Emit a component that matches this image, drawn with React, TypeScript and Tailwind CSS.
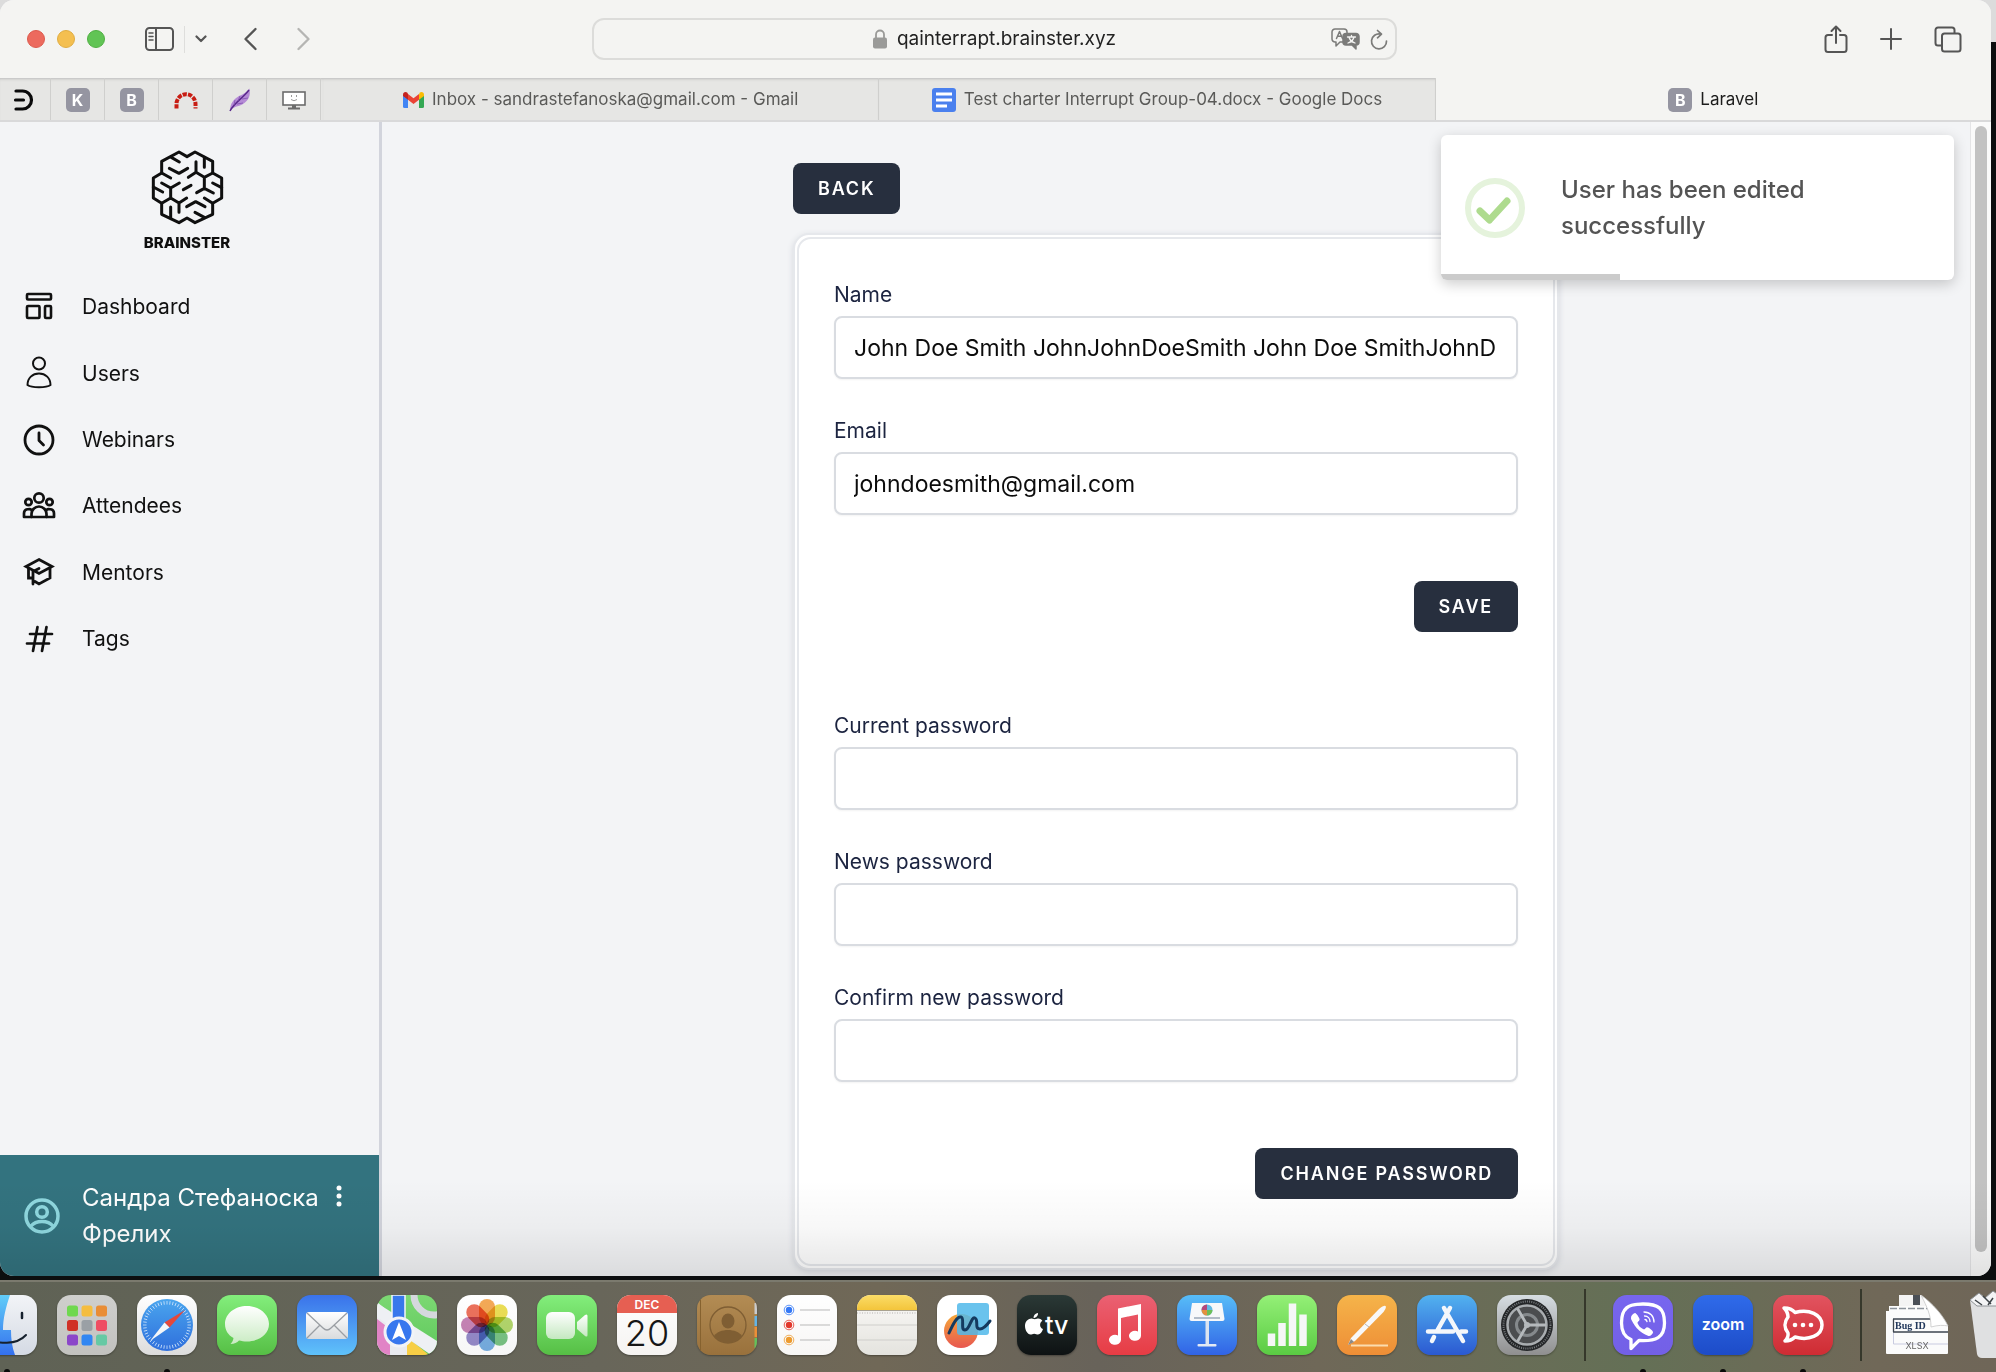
import { useState, type ReactNode } from "react"

interface FieldProps {
  id: string
  label: string
  type?: string
  defaultValue?: string
}

const stroke = {
  fill: "none",
  stroke: "currentColor",
  strokeLinecap: "round",
  strokeLinejoin: "round"
} as const

/* ---------- Browser chrome ---------- */

function Toolbar() {
  return (
    <header className="flex h-[78px] shrink-0 items-center justify-between bg-[#f4f4f2] pr-[29px] pl-[27px] text-[#555555]">
      <div className="flex w-[480px] items-center">
        <div className="flex gap-3">
          <button aria-label="Close" className="size-[18px] rounded-full border border-[#dd5a4d] bg-[#ec6a5e]" />
          <button aria-label="Minimize" className="size-[18px] rounded-full border border-[#e0ad42] bg-[#f4bf50]" />
          <button aria-label="Zoom" className="size-[18px] rounded-full border border-[#50b043] bg-[#61c455]" />
        </div>
        <button aria-label="Sidebar" className="ml-10">
          <svg width="29" height="24" viewBox="0 0 29 24" {...stroke} strokeWidth="2">
            <rect x="1" y="1" width="27" height="22" rx="3.500" />
            <path d="M11 1v22" />
            <path d="M4 6h4M4 9.500h4M4 13h4" strokeWidth="1.500" />
          </svg>
        </button>
        <span className="ml-2.5 h-[27px] w-px bg-[#dededc]" />
        <button aria-label="Tab groups" className="ml-2.5">
          <svg width="12" height="8" viewBox="0 0 12 8" {...stroke} strokeWidth="2.200">
            <path d="M1.500 1.500 6 6l4.500-4.500" />
          </svg>
        </button>
        <button aria-label="Go back" className="ml-9">
          <svg width="14" height="24" viewBox="0 0 14 24" {...stroke} strokeWidth="2.300">
            <path d="M12.500 2 2.500 12l10 10" />
          </svg>
        </button>
        <button aria-label="Go forward" className="ml-10 text-[#b5b5b3]">
          <svg width="14" height="24" viewBox="0 0 14 24" {...stroke} strokeWidth="2.300">
            <path d="m1.500 2 10 10-10 10" />
          </svg>
        </button>
      </div>
      <div className="flex h-[42px] w-[805px] items-center rounded-xl border-2 border-[#dcdcda] px-2">
        <span className="w-14" />
        <div className="flex flex-1 items-center justify-center gap-2.5 text-[19px] text-[#222222]">
          <svg width="14" height="20" viewBox="0 0 14 20">
            <rect x="0" y="8.500" width="14" height="11" rx="2" fill="#9a9a98" />
            <path d="M3 9V5.500a4 4 0 0 1 8 0V9" fill="none" stroke="#9a9a98" strokeWidth="1.800" />
          </svg>
          <span>qainterrapt.brainster.xyz</span>
        </div>
        <div className="flex w-14 items-center gap-2.5 text-[#7b7b79]">
          <button aria-label="Translate">
            <svg width="29" height="22" viewBox="0 0 29 22" {...stroke} strokeWidth="1.500">
              <path d="M12 14H9l-4 4v-4H4a3 3 0 0 1-3-3V4a3 3 0 0 1 3-3h9a3 3 0 0 1 3 3v1" />
              <path d="m5.500 10.500 3-7 3 7M6.500 8.300h4" />
              <path d="M15 5.500h10a3 3 0 0 1 3 3V14a3 3 0 0 1-3 3v4l-4-4h-6a3 3 0 0 1-3-3V8.500a3 3 0 0 1 3-3Z" fill="currentColor" />
              <path d="M16.500 9h8M20.500 7.500V9M23 9c-.5 2.500-3 5-6 6M18 9c.5 2.500 3 5 6 6" stroke="#f4f4f2" strokeWidth="1.300" />
            </svg>
          </button>
          <button aria-label="Reload">
            <svg width="18" height="21" viewBox="0 0 18 21" {...stroke} strokeWidth="1.700">
              <path d="M10.500 5A7.500 7.500 0 1 0 16.500 12M7.500 1.500l4 3.700-4 3.600" />
            </svg>
          </button>
        </div>
      </div>
      <div className="flex w-[480px] items-center justify-end gap-8">
        <button aria-label="Share">
          <svg width="24" height="29" viewBox="0 0 24 29" {...stroke} strokeWidth="2">
            <path d="M8 10H4a2.500 2.500 0 0 0-2.500 2.500v12A2.500 2.500 0 0 0 4 27h16a2.500 2.500 0 0 0 2.500-2.500v-12A2.500 2.500 0 0 0 20 10h-4M12 18V2M7.500 6 12 1.500 16.500 6" />
          </svg>
        </button>
        <button aria-label="New tab">
          <svg width="22" height="22" viewBox="0 0 22 22" {...stroke} strokeWidth="2">
            <path d="M11 1v20M1 11h20" />
          </svg>
        </button>
        <button aria-label="Tab overview">
          <svg width="28" height="27" viewBox="0 0 28 27" {...stroke} strokeWidth="2">
            <path d="M8 19.500H4A2.500 2.500 0 0 1 1.500 17V4A2.500 2.500 0 0 1 4 1.500h14A2.500 2.500 0 0 1 20.500 4v3" />
            <rect x="8" y="7.500" width="18.500" height="18" rx="2.500" />
          </svg>
        </button>
      </div>
    </header>
  )
}

function LetterBadge({ letter }: { letter: string }) {
  return (
    <span className="flex size-6 items-center justify-center rounded-[5px] bg-[#9595a1] text-[16px] leading-6 font-bold text-white">
      {letter}
    </span>
  )
}

function PinnedTab({ label, children }: { label: string; children: ReactNode }) {
  return (
    <button
      aria-label={label}
      className="flex w-[54px] shrink-0 items-center justify-center border-r border-[#cfcfcd] pt-0.5">
      {children}
    </button>
  )
}

function TabStrip() {
  return (
    <nav className="flex h-11 shrink-0 border-b-2 border-[#d9d9da] bg-[#f4f4f2] text-[17px] text-[#5a5a58]">
      <div className="flex w-[323px] shrink-0 bg-[#e6e6e4] shadow-[inset_0_3px_3px_-2px_#bbbbbb]">
        <button
          aria-label="Deepnote"
          className="flex w-[51px] shrink-0 items-center border-r border-[#cfcfcd] pt-0.5 pl-[13px]">
          <svg width="21" height="22" viewBox="0 0 21 22" fill="none" stroke="#0a0a0a" strokeWidth="3.200" strokeLinecap="round">
            <path d="M3 2h6.500a9 9 0 0 1 0 18H3M2.500 11h8" />
          </svg>
        </button>
        <PinnedTab label="K">
          <LetterBadge letter="K" />
        </PinnedTab>
        <PinnedTab label="B">
          <LetterBadge letter="B" />
        </PinnedTab>
        <PinnedTab label="Redmine">
          <svg width="24" height="17" viewBox="0 0 24 17" fill="none" stroke="#c81e14" strokeWidth="4">
            <path d="M2.500 16.500V12A9.500 9.800 0 0 1 21.500 12V16.500" strokeDasharray="4.200 1.200" />
          </svg>
        </PinnedTab>
        <PinnedTab label="Feather">
          <svg width="22" height="24" viewBox="0 0 22 24">
            <path d="M1 23C1 15 5 11 10 8 15 6 18 4 20.500 0.500 22 8 19 13 14 16 9 19 4 18 1 23Z" fill="#b58bd6" />
            <path d="M1 23C5 15 13 11 20 2" stroke="#5b2a8c" strokeWidth="1.500" fill="none" />
            <path d="m5 17 1-5M9 13l2-5M8 16l6-1M13 11l6-1" stroke="#8150b0" strokeWidth=".8" />
          </svg>
        </PinnedTab>
        <PinnedTab label="Monitor">
          <svg width="24" height="19" viewBox="0 0 24 19">
            <rect x="1" y="1" width="22" height="13" fill="#ffffff" stroke="#6b6b6b" strokeWidth="1.600" />
            <path d="M9.500 4v2M14.500 4v2M9 8.500q3 2.500 6 0" stroke="#9a9a9a" fill="none" />
            <path d="M10 14h4v2.500h4V18.500H6V16.500h4Z" fill="#6b6b6b" />
          </svg>
        </PinnedTab>
      </div>
      <button className="flex flex-1 items-center justify-center gap-2 border-r border-[#cfcfcd] bg-[#e6e6e4] pt-0.5 shadow-[inset_0_3px_3px_-2px_#bbbbbb]">
        <svg width="21" height="16" viewBox="0 0 21 16">
          <path d="M0 3v11.500Q0 16 1.500 16H5V6Z" fill="#4285f4" />
          <path d="M21 3v11.500q0 1.500-1.500 1.500H16V6Z" fill="#34a853" />
          <path d="M16 2.500V7.800l5-3.800V2.500C21 .2 18.500-.7 16.800.6Z" fill="#fbbc04" />
          <path d="M5 7.800V2l5.500 4.200L16 2v5.800L10.500 12Z" fill="#ea4335" />
          <path d="M0 2.500V4l5 3.800V2L4.200.6C2.500-.7 0 .2 0 2.500Z" fill="#c5221f" />
        </svg>
        Inbox - sandrastefanoska@gmail.com - Gmail
      </button>
      <button className="flex flex-1 items-center justify-center gap-2 border-r border-[#cfcfcd] bg-[#e6e6e4] pt-0.5 shadow-[inset_0_3px_3px_-2px_#bbbbbb]">
        <svg width="24" height="24" viewBox="0 0 24 24">
          <rect width="24" height="24" rx="3" fill="#4a80ee" />
          <path d="M4 6h16M4 12h16M4 18h11" stroke="#ffffff" strokeWidth="3" />
        </svg>
        Test charter Interrupt Group-04.docx - Google Docs
      </button>
      <button className="flex flex-1 items-center justify-center gap-2 pt-0.5 text-[#1c1c1c]">
        <LetterBadge letter="B" />
        Laravel
      </button>
    </nav>
  )
}

/* ---------- Sidebar ---------- */

const navItems = [
  {
    label: "Dashboard",
    icon: (
      <g strokeWidth="2.600">
        <rect x="5" y="4" width="24" height="5.500" rx="1" />
        <rect x="5" y="16" width="12.500" height="12" rx="1" />
        <rect x="23" y="16" width="6" height="12" rx="1" />
      </g>
    )
  },
  {
    label: "Users",
    icon: (
      <g strokeWidth="2">
        <circle cx="17" cy="7.500" r="6" />
        <path d="M5.500 29c0-7 5-11.500 11.500-11.500S28.500 22 28.500 29c-4 3-19 3-23 0Z" />
      </g>
    )
  },
  {
    label: "Webinars",
    icon: (
      <g strokeWidth="2.800">
        <circle cx="17" cy="17" r="14" />
        <path d="M17 10v7.500l4.500 4.500" />
      </g>
    )
  },
  {
    label: "Attendees",
    icon: (
      <g strokeWidth="2.700">
        <circle cx="17" cy="9" r="4.700" />
        <circle cx="6.500" cy="13" r="3.200" />
        <circle cx="27.500" cy="13" r="3.200" />
        <path d="M9.500 28v-3a7.500 7.500 0 0 1 15 0v3Z" />
        <path d="M9.500 28H2v-3.500c0-3 2.500-4.500 5.500-4.500l2.500 1M24.500 28H32v-3.500c0-3-2.500-4.500-5.500-4.500l-2.500 1" />
      </g>
    )
  },
  {
    label: "Mentors",
    icon: (
      <g strokeWidth="2.800" strokeLinejoin="miter">
        <path d="m17 4.500 13 7-13 7-13-7Z" />
        <path d="M6.500 13.500V23h3.500M28 13.500V23l-11 6-4-2.500M11 29V16.500l6-3" />
      </g>
    )
  },
  {
    label: "Tags",
    icon: (
      <g strokeWidth="2.700">
        <path d="M15.500 5 11 29M24.500 5 20 29M8 12h22M5 21.500h22" />
      </g>
    )
  }
]

function BrainLogo() {
  return (
    <svg width="75" height="75" viewBox="30 13 225 225" {...stroke} strokeWidth="9">
      <path d="m117 19 24 14 24-14 53 28v35l27 15v60l-27 16v33l-53 25-24-14-24 14-52-25v-33l-25-16V97l25-15V47Z" />
      <path d="m65 82 27 15M94 35l24 14M88 68l29 15 26-15M168 48v32l-23 15M168 80l25 15 25-13M193 35v30M193 95v33l-23 13M193 128l27 14M218 112l27 14M130 132l23-13" />
      <path d="m65 112 27 15 26-15M92 127v30l-27 16M92 157l25 15 23-15M117 172v28M92 184v32M40 124l28 15M140 183l27-15 28 15M165 200l28 15M193 157l25 16" />
    </svg>
  )
}

function Sidebar() {
  return (
    <aside className="flex w-[382px] shrink-0 flex-col border-r-3 border-[#d2d4dc]">
      <a href="#home" className="mt-7 flex flex-col items-center gap-1.5 pr-[5px] text-[#0f0f0f]">
        <BrainLogo />
        <span className="text-[15px] leading-6 font-extrabold">BRAINSTER</span>
      </a>
      <nav className="mt-[19px] flex h-[398px] flex-col">
        {navItems.map((item) => (
          <a
            key={item.label}
            href={`#${item.label.toLowerCase()}`}
            className="flex flex-1 items-center gap-[26px] px-[22px] text-[21px] text-[#111111]">
            <svg width="34" height="34" viewBox="0 0 34 34" {...stroke}>
              {item.icon}
            </svg>
            {item.label}
          </a>
        ))}
      </nav>
      <div className="mt-auto flex h-[121px] items-center bg-[#33737f] px-6 text-white">
        <svg width="36" height="36" viewBox="0 0 36 36" fill="none" stroke="#8fd8df" strokeWidth="3.500" className="shrink-0">
          <circle cx="18" cy="18" r="16" />
          <circle cx="18" cy="14" r="5.300" />
          <path d="M7 28c5-6 17-6 22 0" />
        </svg>
        <p className="ml-[22px] flex-1 text-[24px] leading-9">Сандра Стефаноска Фрелих</p>
        <button aria-label="Account menu" className="mb-10 w-8">
          <svg width="32" height="22" viewBox="0 0 32 22" fill="#ffffff">
            <circle cx="16" cy="3" r="2.500" />
            <circle cx="16" cy="11" r="2.500" />
            <circle cx="16" cy="19" r="2.500" />
          </svg>
        </button>
      </div>
    </aside>
  )
}

/* ---------- Form ---------- */

function Field({ id, label, type = "text", defaultValue = "" }: FieldProps) {
  const [value, setValue] = useState(defaultValue)

  return (
    <div>
      <label htmlFor={id} className="block text-[21px] leading-7 text-[#1c2440]">
        {label}
      </label>
      <input
        id={id}
        type={type}
        value={value}
        onChange={(e) => setValue(e.target.value)}
        className="mt-[7px] h-[63px] w-full rounded-lg border-2 border-[#d9dce1] bg-white px-[18px] text-[23px] text-[#0c0c0c] shadow-xs"
      />
    </div>
  )
}

function DarkButton({ children }: { children: ReactNode }) {
  return (
    <button className="h-[51px] rounded-lg bg-[#272f3e] px-[25px] text-[18px] font-semibold tracking-widest text-white uppercase">
      {children}
    </button>
  )
}

function EditUser() {
  return (
    <main className="flex flex-1 flex-col items-center">
      <div className="mt-[41px] flex w-[766px] flex-1 flex-col items-start">
        <DarkButton>Back</DarkButton>
        <div className="mt-[19px] w-full rounded-[16px] border-2 border-[#e6e8ec] bg-white p-0.5 shadow-[0_2px_6px_#d5d8de]">
          <div className="flex flex-col rounded-[14px] border-2 border-[#e6e8ec] px-[35px] pt-[42px] pb-[65px]">
            <form className="flex flex-col gap-[38px]" onSubmit={(e) => e.preventDefault()}>
              <Field id="name" label="Name" defaultValue="John Doe Smith JohnJohnDoeSmith John Doe SmithJohnD" />
              <Field id="email" label="Email" type="email" defaultValue="johndoesmith@gmail.com" />
              <div className="mt-7 flex justify-end">
                <DarkButton>Save</DarkButton>
              </div>
            </form>
            <form className="mt-20 flex flex-col gap-[38px]" onSubmit={(e) => e.preventDefault()}>
              <Field id="current-password" label="Current password" type="password" />
              <Field id="new-password" label="News password" type="password" />
              <Field id="confirm-password" label="Confirm new password" type="password" />
              <div className="mt-7 flex justify-end">
                <DarkButton>Change password</DarkButton>
              </div>
            </form>
          </div>
        </div>
      </div>
    </main>
  )
}

function Toast() {
  return (
    <div
      role="status"
      className="absolute top-[13px] right-[37px] flex h-[145px] w-[513px] flex-col overflow-hidden rounded-md bg-white shadow-[0_4px_14px_#00000033]">
      <div className="flex flex-1 items-center gap-9 pt-1.5 pl-6">
        <svg width="60" height="60" viewBox="0 0 60 60" fill="none" strokeLinecap="round" strokeLinejoin="round">
          <circle cx="30" cy="30" r="27" stroke="#e5f3dc" strokeWidth="6" />
          <path d="m15 33 9.500 9L42 23" stroke="#aedb8e" strokeWidth="7" />
        </svg>
        <p className="w-[300px] text-[24px] leading-9 font-medium text-[#545454]">User has been edited successfully</p>
      </div>
      <div className="h-1.5 w-[179px] bg-[#cbcbcb]" />
    </div>
  )
}

/* ---------- Dock ---------- */

function Gradient({ id, from, to }: { id: string; from: string; to: string }) {
  return (
    <defs>
      <linearGradient id={id} x1="0" y1="0" x2="0" y2="1">
        <stop offset="0" stopColor={from} />
        <stop offset="1" stopColor={to} />
      </linearGradient>
    </defs>
  )
}

function DockIcon({ id, label, from, to, running, children }: {
  id: string
  label: string
  from: string
  to: string
  running?: boolean
  children?: ReactNode
}) {
  return (
    <button aria-label={label} className="relative shrink-0">
      <svg width="60" height="60" viewBox="0 0 60 60" className="overflow-hidden rounded-[14px] shadow-[0_1px_2px_#00000055]">
        <Gradient id={id} from={from} to={to} />
        <rect width="60" height="60" fill={`url(#${id})`} />
        {children}
      </svg>
      {running && <span className="absolute -bottom-[19px] left-[27px] h-[5px] w-1.5 rounded-t-full bg-[#0a0a0a]" />}
    </button>
  )
}

const launchpadColors = [
  "#6fd84f", "#f5bd3e", "#e98d35",
  "#d03126", "#9aa0a5", "#ef4d63",
  "#8b46c9", "#3187f2", "#66c9a4"
]

const photoPetals = [
  "#f29a38", "#e8d837", "#a5cf52", "#62b96e",
  "#5fa0dc", "#8276c0", "#bc6fa8", "#e9583f"
]

const ticks = Array.from({ length: 48 }, (_, i) => i * 7.5)

function DockDivider() {
  return <span className="mx-[7px] h-[72px] w-0.5 shrink-0 bg-[#36382b]" />
}

function Dock() {
  return (
    <footer className="h-[92px] shrink-0 overflow-hidden border-t-2 border-[#7b7a6e] bg-[linear-gradient(90deg,#5f6255,#68665a_30%,#706857_44%,#68635a_55%,#6f6858_66%,#647056_82%,#706858_94%,#6f6658)]">
      <div className="-ml-[23px] flex h-[92px] items-center gap-5 pb-1.5">
        <DockIcon id="finder" label="Finder" from="#f2f4f7" to="#d4dae4" running>
          <Gradient id="finder-face" from="#62cdf8" to="#3470ee" />
          <path d="M0 0h33c-4 12-7 23-7 35h8c0 9 1 17 4 25H0Z" fill="url(#finder-face)" />
          <path d="M10 42c10 8 30 8 39-2" stroke="#16212e" strokeWidth="2" fill="none" strokeLinecap="round" />
          <path d="M45 18v5" stroke="#16212e" strokeWidth="2.500" strokeLinecap="round" />
        </DockIcon>
        <DockIcon id="launchpad" label="Launchpad" from="#cfcfcd" to="#c2c2bf">
          {launchpadColors.map((color, i) => (
            <rect key={color} x={10 + (i % 3) * 14.5} y={10.5 + Math.floor(i / 3) * 14.5} width="11" height="11" rx="2.500" fill={color} />
          ))}
        </DockIcon>
        <DockIcon id="safari" label="Safari" from="#ffffff" to="#dcdcdc" running>
          <Gradient id="safari-dial" from="#4aa5ee" to="#2f6fdc" />
          <circle cx="30" cy="30" r="26" fill="url(#safari-dial)" />
          {ticks.map((a) => (
            <path key={a} d="M30 6v3.500" stroke="#cfe4fa" strokeWidth=".8" transform={`rotate(${a} 30 30)`} />
          ))}
          <path d="M48 15 27.500 27.500l5 5Z" fill="#e5483b" />
          <path d="M13 46 27.500 27.500l5 5Z" fill="#f4f6f8" />
        </DockIcon>
        <DockIcon id="messages" label="Messages" from="#83ee7c" to="#56bf45">
          <Gradient id="bubble" from="#ffffff" to="#c9ebc2" />
          <path d="M30 11c-12 0-22 7.500-22 18 0 6 3 11 8.500 14-.5 3-1.500 4.500-3 6 4 0 6.500-1.500 8.500-3.500 2.500.5 5 1 8 1 12 0 22-7.500 22-17.500S42 11 30 11Z" fill="url(#bubble)" />
        </DockIcon>
        <DockIcon id="mail" label="Mail" from="#3a72ea" to="#5fc2fa">
          <Gradient id="envelope" from="#ffffff" to="#d9dbdd" />
          <rect x="9" y="17" width="42" height="27" rx="3" fill="url(#envelope)" />
          <path d="m10 18 16 15q4 4 8 0l16-15M10 43l13-13M50 43 37 30" stroke="#9a9ea3" strokeWidth="1.300" fill="none" />
        </DockIcon>
        <DockIcon id="maps" label="Maps" from="#7cd873" to="#5fc95c">
          <path d="M0 7v53h30V32Z" fill="#e9ebef" />
          <path d="M0 24v36h13V34Z" fill="#e184c6" />
          <path d="M30 42v18h22Z" fill="#f7ce46" />
          <path d="m0 8 60 38v14h-6L0 22Z" fill="#eef0f4" />
          <path d="M15 0h13v38H15Z" fill="#3878ec" stroke="#f5f6f8" strokeWidth="1.500" />
          <circle cx="57" cy="0" r="20" fill="none" stroke="#d5d8dd" strokeWidth="7" />
          <circle cx="22" cy="37" r="14" fill="#3777ee" stroke="#f1f3f7" strokeWidth="3" />
          <path d="m22 27 7 18-7-4-7 4Z" fill="#ffffff" />
        </DockIcon>
        <DockIcon id="photos" label="Photos" from="#ffffff" to="#f6f6f6">
          {photoPetals.map((color, i) => (
            <rect
              key={color}
              x="22"
              y="4"
              width="16"
              height="26"
              rx="8"
              fill={color}
              fillOpacity=".85"
              className="mix-blend-multiply"
              transform={`rotate(${i * 45} 30 30)`}
            />
          ))}
        </DockIcon>
        <DockIcon id="facetime" label="FaceTime" from="#83ee7c" to="#56bf45">
          <Gradient id="camera" from="#ffffff" to="#c4e8c0" />
          <rect x="9" y="17" width="29" height="27" rx="6" fill="url(#camera)" />
          <path d="m40 27 8-7q2.500-1.500 2.500 1v19q0 2.500-2.500 1l-8-7Z" fill="url(#camera)" />
        </DockIcon>
        <DockIcon id="calendar" label="Calendar" from="#ffffff" to="#f5f3f1">
          <rect width="60" height="18" fill="#e65f52" />
          <text x="30" y="14" textAnchor="middle" fontSize="12" fontWeight="600" fill="#ffffff">DEC</text>
          <text x="30" y="51" textAnchor="middle" fontSize="36" fontWeight="300" fill="#161616">20</text>
        </DockIcon>
        <DockIcon id="contacts" label="Contacts" from="#b38c54" to="#99713c">
          <path d="M3.500 0v60" stroke="#86622f" />
          <circle cx="31" cy="30" r="18" fill="none" stroke="#7f5e33" strokeWidth="1.300" />
          <ellipse cx="31" cy="26" rx="6.500" ry="7.500" fill="#7f5e33" />
          <path d="M17 41c5-8 23-8 28 0-7 9-21 9-28 0Z" fill="#7f5e33" />
          <path d="M59 8v11" stroke="#c9cbce" strokeWidth="3" />
          <path d="M59 21v10" stroke="#63b4e6" strokeWidth="3" />
          <path d="M59 32v10" stroke="#ec8f37" strokeWidth="3" />
          <path d="M59 43v10" stroke="#62c25c" strokeWidth="3" />
        </DockIcon>
        <DockIcon id="reminders" label="Reminders" from="#ffffff" to="#f7f6f5">
          {["#3478f6", "#e2382c", "#ed9b2f"].map((color, i) => (
            <g key={color}>
              <circle cx="12" cy={15 + i * 15} r="3.200" fill={color} />
              <circle cx="12" cy={15 + i * 15} r="4.800" fill="none" stroke={color} strokeWidth=".8" />
              <path d={`M23 ${15 + i * 15}h30`} stroke="#b9b9b9" />
            </g>
          ))}
        </DockIcon>
        <DockIcon id="notes" label="Notes" from="#fbfaf8" to="#e4e3de">
          <Gradient id="notes-top" from="#fbdc68" to="#f3c53b" />
          <rect width="60" height="15" fill="url(#notes-top)" />
          <path d="M0 15.500h60" stroke="#a9a290" />
          <path d="M0 18h60" stroke="#c9c8c4" strokeWidth="1.500" strokeDasharray="1 1.500" />
          <path d="M0 30h60M0 45h60" stroke="#cfcecb" />
        </DockIcon>
        <DockIcon id="freeform" label="Freeform" from="#ffffff" to="#ffffff">
          <Gradient id="freeform-disc" from="#f5a93b" to="#e8574f" />
          <circle cx="24" cy="36" r="17" fill="url(#freeform-disc)" />
          <rect x="20" y="8" width="32" height="32" rx="3" fill="#50b9ea" fillOpacity=".85" />
          <path d="M12 38c4-9 8-17 12-16s-1 13 4 13 6-14 10-12-1 11 5 11c4 0 7-4 10-8" stroke="#143a5f" strokeWidth="3" fill="none" strokeLinecap="round" />
        </DockIcon>
        <DockIcon id="appletv" label="TV" from="#2b3936" to="#0e1213">
          <path d="M21 18c.3 2.800-2 5-4.500 5 0-2.700 2-4.700 4.500-5ZM8 31c0-5 4-8 7.500-7.300 2 .6 2.500.6 4.500 0 2-.5 4 .3 5.300 2-3.300 2.300-2.700 7 .7 8.300-1 3-3 5.500-5 5.500-1.500 0-2-.8-3.800-.8s-2.200.8-3.700.8C10.500 39.500 8 35 8 31Z" fill="#ffffff" />
          <text x="28" y="39" fontSize="25" fontWeight="500" fill="#ffffff">tv</text>
        </DockIcon>
        <DockIcon id="music" label="Music" from="#ea6173" to="#e73c44">
          <path d="M21 13.500 44 9v32a6 5 0 1 1-3-4.500V19.500l-17 3.500v22a6 5 0 1 1-3-4.500Z" fill="#ffffff" />
        </DockIcon>
        <DockIcon id="keynote" label="Keynote" from="#57bdf8" to="#3163e6">
          <path d="M28.500 26h3.500v24h-3.500Z" fill="#dce4f0" />
          <path d="M15 8h30l2.500 16q0 2-2 2h-31q-2 0-2-2Z" fill="#f7f8fa" />
          <path d="M17 23h26" stroke="#9ba8b8" strokeWidth="1.500" />
          <circle cx="30" cy="15" r="5.500" fill="#62b9e3" />
          <path d="M30 15V9.500a5.500 5.500 0 0 0-5.500 5.500Z" fill="#b5477c" />
          <path d="M30 15h-5.500a5.500 5.500 0 0 0 5.500 5.500Z" fill="#e4903f" />
          <path d="M30 15v5.500a5.500 5.500 0 0 0 5.500-5.500Z" fill="#6dbf58" />
          <rect x="20.500" y="49" width="19" height="2.500" rx="1" fill="#e4eaf4" />
        </DockIcon>
        <DockIcon id="numbers" label="Numbers" from="#94f077" to="#5acb43">
          <path d="M14.500 38.500V51M25 28V51M35.500 8.500V51M46 19.500V51" stroke="#f5f7f6" strokeWidth="7.500" />
        </DockIcon>
        <DockIcon id="pages" label="Pages" from="#f5b44a" to="#ee8e36">
          <path d="M14 50.500h37" stroke="#fbdcae" strokeWidth="2" />
          <path d="M11 50 14 43 42 14q5-4 6.500-3t-2 6L18 46Z" fill="#f8f8f8" />
          <path d="m11 50 3-6 3 3Z" fill="#8a8a8a" />
          <path d="m28 29 4 3" stroke="#b5b5b5" />
        </DockIcon>
        <DockIcon id="appstore" label="App Store" from="#52b2f0" to="#2b59d2">
          <path d="M33 13 20 36M27 13l19 33M17 42l-2 4M11 36.500h25M44 36.500h5" stroke="#f4f7fb" strokeWidth="4.500" strokeLinecap="round" />
        </DockIcon>
        <DockIcon id="settings" label="System Settings" from="#d6dde2" to="#8f8f8f">
          <circle cx="30" cy="30" r="26" fill="#242628" />
          <circle cx="30" cy="30" r="23.500" fill="none" stroke="#777b7e" strokeWidth="2" strokeDasharray="1 1.200" />
          <circle cx="30" cy="30" r="19.500" fill="#4b4d4f" stroke="#a9adb0" strokeWidth="2.500" />
          <circle cx="30" cy="30" r="10.500" fill="none" stroke="#85898c" strokeWidth="3" />
          <path d="M30 30h19M30 30 20.500 13.500M30 30l-9.500 16.500" stroke="#b5b9bc" strokeWidth="2.800" />
          <circle cx="30" cy="30" r="3" fill="#b5b9bc" />
        </DockIcon>
        <DockDivider />
        <DockIcon id="viber" label="Viber" from="#7766ef" to="#7360e6" running>
          <path d="M30 9c-15 0-21.500 4-21.500 19 0 9 3 14 9.500 16.500v9l8-8c17 1 25.500-3 25.500-17.500C51.500 13 45 9 30 9Z" fill="none" stroke="#ffffff" strokeWidth="3.300" strokeLinejoin="round" />
          <path d="M22 18c-3 1-5 4-3.500 7 4 8 9 13 17 16 2 .5 4-2 4.500-3.500s-5-6-6.500-5-2 2.500-3.500 1.500c-3-1.500-4.500-3.500-5.500-6 0-1.500 2.500-2 2-4S23 18 22 18Z" fill="#ffffff" />
          <path d="M31 17c6 0 10 4 10 10M31.500 21c3.500 0 5.500 2.500 5.500 5.500M32 24.500q1.500 0 2 2" stroke="#ffffff" strokeWidth="1.300" fill="none" strokeLinecap="round" />
        </DockIcon>
        <DockIcon id="zoom" label="Zoom" from="#2f6bea" to="#1d4cc8" running>
          <text x="30" y="35" textAnchor="middle" fontSize="16" fontWeight="600" fill="#ffffff">zoom</text>
        </DockIcon>
        <DockIcon id="rocket" label="Rocket.Chat" from="#e25460" to="#cf2c33" running>
          <path d="M11 13c5 0 9 2 11 4.500 14-4 27 2 27 12.500S36 46 22 42c-3 3-6 4-10 4 3-3 3.500-5 3-8-4-5-4-11 0-16 0-4-1-6-4-9Z" fill="none" stroke="#ffffff" strokeWidth="3.500" strokeLinejoin="round" />
          <circle cx="22" cy="30" r="2.300" fill="#ffffff" />
          <circle cx="30" cy="30" r="2.300" fill="#ffffff" />
          <circle cx="38" cy="30" r="2.300" fill="#ffffff" />
        </DockIcon>
        <DockDivider />
        <button aria-label="Bug ID spreadsheet" className="-ml-1 shrink-0">
          <svg width="64" height="60" viewBox="0 0 64 60">
            <path d="M14 0h22l6 8v8H14Z" fill="#f4f4f4" />
            <path d="M28 0h7v10h-7Z" fill="#4b5057" />
            <path d="M4 11h42l17 20v27q0 1-1 1H2q-1 0-1-1V16h3Z" fill="#fbfbfb" />
            <path d="M5 13.500h38" stroke="#8d949c" strokeWidth="1.500" strokeDasharray="7 2" />
            <path d="M8 24h38M8 37h55M8.500 24v13" stroke="#3e4650" strokeWidth="1.300" fill="none" />
            <path d="M8.500 38v11H63" stroke="#c9cbe0" fill="none" />
            <path d="M36 0c6 12 10 20 10 32 7-2 13-2 17-1C58 20 47 8 36 0Z" fill="#ffffff" stroke="#c6c6c6" strokeWidth=".8" />
            <text x="10" y="34" fontSize="10" fontWeight="700" fontFamily="Liberation Serif, serif" fill="#22385c">Bug ID</text>
            <text x="32" y="54" textAnchor="middle" fontSize="9" fill="#666666">XLSX</text>
          </svg>
        </button>
        <button aria-label="Trash" className="shrink-0">
          <svg width="60" height="70" viewBox="0 0 60 70">
            <path d="M1 10h58l-7 54q-1 4-5 4H13q-4 0-5-4Z" fill="#dfe0e1" />
            <path d="M1 10 10 3l6 5 8-7 10 7 9-5 15 7-6 6H8Z" fill="#f3f4f5" stroke="#8d9296" />
            <path d="m6 10 7 5M14 6l8 8M24 8l-5 7" stroke="#3e4448" strokeWidth="1.500" />
          </svg>
        </button>
      </div>
    </footer>
  )
}

export default function App() {
  return (
    <div className="flex h-screen flex-col overflow-hidden bg-[linear-gradient(#dcdcdc_42px,#0c0e0f_42px)] font-[Inter,'Noto_Sans',sans-serif]">
      <div className="relative mr-[5px] mb-1 flex min-h-0 flex-1 flex-col overflow-hidden rounded-[14px] bg-[#f3f4f6]">
        <Toolbar />
        <TabStrip />
        <div className="relative flex min-h-0 flex-1">
          <Sidebar />
          <EditUser />
          <div className="flex w-[21px] shrink-0 justify-center border-l border-[#e4e4e6] bg-[#fafafa] pt-1 pb-6">
            <span className="w-3 rounded-full bg-[#c2c2c2]" />
          </div>
          <Toast />
        </div>
        <div className="pointer-events-none absolute inset-x-0 bottom-0 h-24 bg-linear-to-b from-transparent via-black/3 to-black/10" />
      </div>
      <Dock />
    </div>
  )
}
